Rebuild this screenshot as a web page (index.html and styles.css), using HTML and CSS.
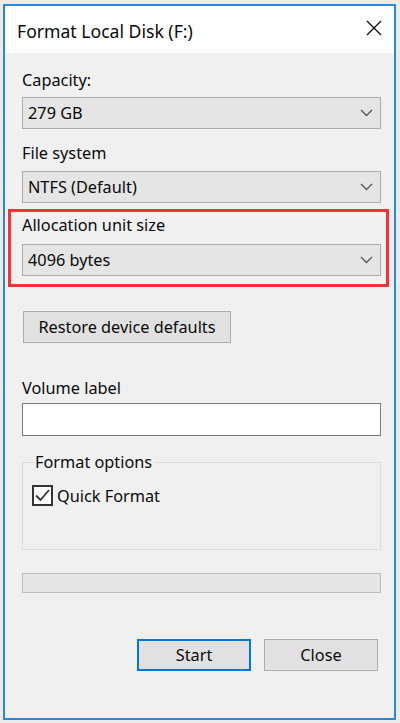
FILE: index.html
```html
<!DOCTYPE html>
<html>
<head>
<meta charset="utf-8">
<link rel="stylesheet" href="styles.css">
</head>
<body>
<div class="window">
  <div class="titlebar">
    <span class="title">Format Local Disk (F:)</span>
    <svg class="close" width="16" height="16" viewBox="0 0 16 16"><path d="M1 1 L15 15 M15 1 L1 15" stroke="#111" stroke-width="1.4" fill="none"/></svg>
  </div>
  <div class="content">
    <div class="label first">Capacity:</div>
    <div class="combo"><span>279 GB</span><svg class="chev" width="13" height="8" viewBox="0 0 13 8"><polyline points="1,1 6.5,6.5 12,1" stroke="#5a5a5a" stroke-width="1.4" fill="none"/></svg></div>
    <div class="label">File system</div>
    <div class="combo"><span>NTFS (Default)</span><svg class="chev" width="13" height="8" viewBox="0 0 13 8"><polyline points="1,1 6.5,6.5 12,1" stroke="#5a5a5a" stroke-width="1.4" fill="none"/></svg></div>
    <div class="highlight">
      <div class="label inbox">Allocation unit size</div>
      <div class="combo"><span>4096 bytes</span><svg class="chev" width="13" height="8" viewBox="0 0 13 8"><polyline points="1,1 6.5,6.5 12,1" stroke="#5a5a5a" stroke-width="1.4" fill="none"/></svg></div>
    </div>
    <button class="btn restore">Restore device defaults</button>
    <div class="label vol">Volume label</div>
    <div class="textbox"></div>
    <fieldset class="group">
      <legend>Format options</legend>
      <div class="check-row">
        <span class="checkbox"><svg width="17" height="17" viewBox="0 0 17 17"><polyline points="2,8.5 6.5,13 15,3" stroke="#333" stroke-width="1.8" fill="none"/></svg></span>
        <span class="check-label">Quick Format</span>
      </div>
    </fieldset>
    <div class="progress"></div>
    <div class="actions">
      <button class="btn primary">Start</button>
      <button class="btn">Close</button>
    </div>
  </div>
</div>
</body>
</html>
```
FILE: styles.css
```css
html, body {
  margin: 0;
  padding: 0;
  background: #ebebeb;
}
body {
  width: 400px;
  height: 723px;
  overflow: hidden;
  font-family: "Noto Sans", "Open Sans", sans-serif;
  font-size: 16.3px;
  color: #0a0a0a;
}
.window {
  box-sizing: border-box;
  margin: 4px 0 0 3px;
  width: 393px;
  height: 716px;
  border: 2px solid #2b87da;
  background: #f0f0f0;
}
.titlebar {
  height: 47px;
  background: #ffffff;
  display: flex;
  align-items: center;
  justify-content: space-between;
  padding: 0 12px 0 12px;
}
.title {
  font-size: 17.6px;
  color: #0a0a0a;
  margin-top: 2px;
}
.close {
  margin-top: -4px;
}
.content {
  padding: 0 13px 0 17px;
  display: flex;
  flex-direction: column;
}
.label {
  line-height: 20px;
  height: 20px;
  margin-top: 14px;
  margin-bottom: 8px;
}
.label.first {
  margin-top: 17px;
  margin-bottom: 7px;
}
.combo {
  box-sizing: border-box;
  height: 32px;
  background: #e5e5e5;
  border: 1px solid #adadad;
  display: flex;
  align-items: center;
  justify-content: space-between;
  padding: 0 7px 0 5px;
}
.combo span {
  line-height: 20px;
}
.highlight {
  margin: 6px -8px 0 -14px;
  border: 3px solid #f23439;
  padding: 3px 5px 8px 11px;
}
.label.inbox {
  margin-top: 0;
  margin-bottom: 9px;
}
.btn {
  box-sizing: border-box;
  font-family: inherit;
  font-size: 16.3px;
  color: #0a0a0a;
  background: #e1e1e1;
  border: 1px solid #adadad;
  height: 32px;
  width: 114px;
  padding: 0;
  line-height: 20px;
}
.restore {
  margin-top: 24px;
  margin-left: 1px;
  width: 208px;
  align-self: flex-start;
}
.label.vol {
  margin-top: 35px;
  margin-bottom: 5px;
}
.textbox {
  box-sizing: border-box;
  height: 33px;
  background: #ffffff;
  border: 1px solid #7a7a7a;
}
.group {
  margin: 16px 0 0 0;
  padding: 0 10px 43px 10px;
  border: 1px solid #dcdcdc;
  min-width: 0;
}
.group legend {
  padding: 0 2px;
  line-height: 20px;
}
.check-row {
  display: flex;
  align-items: center;
  margin-top: 13px;
  margin-left: -1px;
}
.checkbox {
  box-sizing: border-box;
  width: 21px;
  height: 21px;
  border: 2px solid #333;
  background: #ffffff;
  display: flex;
  align-items: center;
  justify-content: center;
  margin-right: 4px;
}
.check-label {
  line-height: 20px;
}
.progress {
  box-sizing: border-box;
  margin-top: 23px;
  height: 20px;
  background: #e6e6e6;
  border: 1px solid #bcbcbc;
}
.actions {
  margin-top: 46px;
  margin-right: 3px;
  display: flex;
  justify-content: flex-end;
  gap: 13px;
}
.btn.primary {
  border: 2px solid #0078d7;
}
```
